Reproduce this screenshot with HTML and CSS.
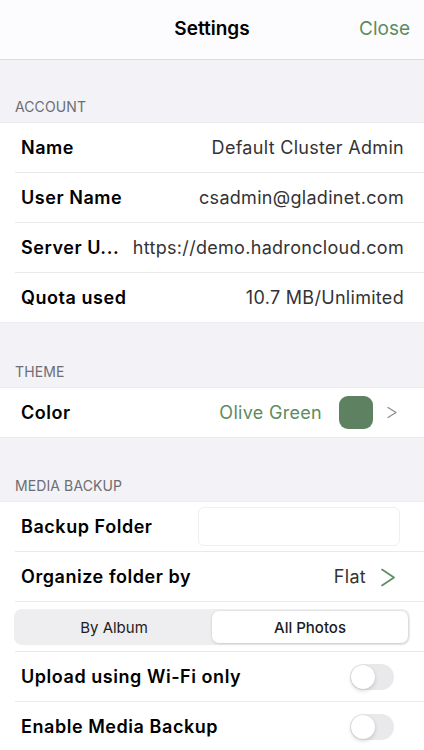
FILE: index.html
```html
<!DOCTYPE html>
<html>
<head>
<meta charset="utf-8">
<link rel="stylesheet" href="styles.css">
</head>
<body>
<div class="screen">
  <header class="navbar">
    <div class="nav-title">Settings</div>
    <div class="nav-close">Close</div>
  </header>

  <div class="section-head sh-account">ACCOUNT</div>
  <div class="group">
    <div class="row"><span class="label">Name</span><span class="value">Default Cluster Admin</span></div>
    <div class="row"><span class="label">User Name</span><span class="value">csadmin@gladinet.com</span></div>
    <div class="row"><span class="label">Server U...</span><span class="value">https://demo.hadroncloud.com</span></div>
    <div class="row"><span class="label">Quota used</span><span class="value">10.7 MB/Unlimited</span></div>
  </div>

  <div class="section-head sh-theme">THEME</div>
  <div class="group">
    <div class="row row-color">
      <span class="label">Color</span>
      <span class="color-right">
        <span class="value green">Olive Green</span>
        <span class="swatch"></span>
        <svg class="chev-gray" width="12" height="13" viewBox="0 0 12 13"><path d="M2 1.5 L10 6.5 L2 11.5" fill="none" stroke="#8a8a8e" stroke-width="1.2" stroke-linecap="round" stroke-linejoin="round"/></svg>
      </span>
    </div>
  </div>

  <div class="section-head sh-media">MEDIA BACKUP</div>
  <div class="group">
    <div class="row"><span class="label">Backup Folder</span><span class="field"></span></div>
    <div class="row row-org">
      <span class="label">Organize folder by</span>
      <span class="org-right">
        <span class="value">Flat</span>
        <svg class="chev-green" width="16" height="19" viewBox="0 0 16 19"><path d="M2 1.5 L14 9.5 L2 17.5" fill="none" stroke="#5b8c5f" stroke-width="1.6" stroke-linecap="round" stroke-linejoin="round"/></svg>
      </span>
    </div>
    <div class="row row-seg">
      <div class="segmented">
        <div class="seg">By Album</div>
        <div class="seg seg-on">All Photos</div>
      </div>
    </div>
    <div class="row"><span class="label">Upload using Wi-Fi only</span><span class="toggle"><span class="knob"></span></span></div>
    <div class="row"><span class="label">Enable Media Backup</span><span class="toggle"><span class="knob"></span></span></div>
  </div>
</div>
</body>
</html>
```

FILE: styles.css
```css
* { box-sizing: border-box; }
html, body { margin: 0; padding: 0; }
body {
  background: #f2f2f7;
  font-family: Inter, "Liberation Sans", Arial, sans-serif;
  color: #000;
  width: 424px;
  overflow: hidden;
}
.screen { width: 424px; }
.navbar {
  height: 60px;
  background: #fcfcfe;
  border-bottom: 1px solid #dcdce0;
  display: flex;
  align-items: center;
  justify-content: center;
  position: relative;
}
.nav-title {
  font-size: 19px;
  font-weight: 600;
  letter-spacing: 0;
  margin-top: -3px;
}
.nav-close {
  position: absolute;
  right: 14px;
  top: 17px;
  font-size: 19px;
  color: #5b8c5f;
}
.section-head {
  display: flex;
  align-items: flex-end;
  padding-left: 15px;
  font-size: 14px;
  color: #6d6d72;
  line-height: 16px;
  letter-spacing: 0.1px;
}
.sh-account { height: 62px; padding-bottom: 7px; }
.sh-theme { height: 64px; padding-bottom: 7px; }
.sh-media { height: 63px; padding-bottom: 7px; }
.group {
  background: #fff;
  border-top: 1px solid #ececf0;
  border-bottom: 1px solid #ececf0;
  padding-left: 15px;
}
.group .row + .row { border-top: 1px solid #e9e9ed; }
.row {
  height: 50px;
  display: flex;
  align-items: center;
  justify-content: space-between;
  padding-left: 6px;
  padding-right: 20px;
}
.group .row:first-child { height: 49px; }
.label {
  font-size: 18px;
  font-weight: 600;
  letter-spacing: 0.55px;
  white-space: nowrap;
}
.value {
  font-size: 18px;
  color: #333336;
  white-space: nowrap;
  letter-spacing: 0.3px;
}
.green { color: #5b8c5f; }
.color-right { display: flex; align-items: center; }
.swatch {
  width: 34px;
  height: 33px;
  border-radius: 9px;
  background: #5e8261;
  margin-left: 17px;
  margin-right: 13px;
}
.row-color { padding-right: 26px; }
.chev-gray { display: block; }
.org-right { display: flex; align-items: center; }
.row-org { padding-right: 28px; }
.chev-green { display: block; margin-left: 14px; margin-top: 1px; }
.field {
  width: 202px;
  height: 39px;
  border: 1px solid #efeff3;
  border-radius: 6px;
  background: #fff;
  margin-right: 4px;
}
.row-seg { padding-left: 0; padding-right: 14px; }
.segmented {
  width: 396px;
  height: 36px;
  margin-left: -1px;
  margin-top: 1px;
  background: #eeeef0;
  border-radius: 8px;
  display: flex;
  padding: 2px;
}
.seg {
  flex: 1;
  display: flex;
  align-items: center;
  justify-content: center;
  font-size: 15px;
  color: #1c1c1e;
  border-radius: 7px;
}
.seg-on {
  background: #fff;
  box-shadow: 0 1px 3px rgba(0,0,0,0.12), 0 0 0 0.5px rgba(0,0,0,0.04);
  font-weight: 500;
}
.toggle {
  width: 44px;
  height: 26px;
  border-radius: 13px;
  background: #e9e9eb;
  position: relative;
  margin-right: 10px;
}
.knob {
  position: absolute;
  left: 1px;
  top: 1px;
  width: 24px;
  height: 24px;
  border-radius: 50%;
  background: #fff;
  box-shadow: 0 2px 4px rgba(0,0,0,0.15), 0 0 1px rgba(0,0,0,0.15);
}
```
